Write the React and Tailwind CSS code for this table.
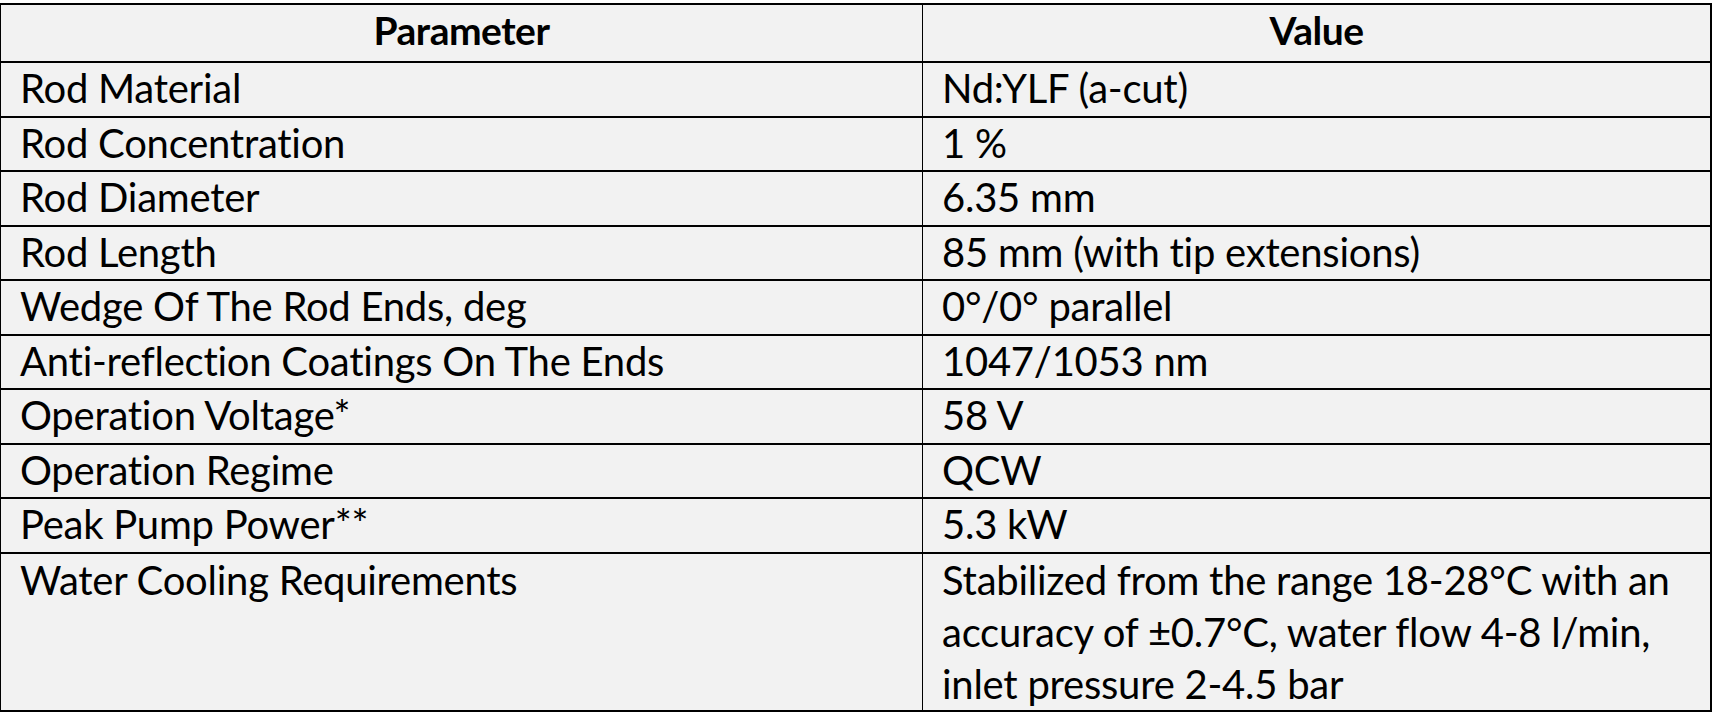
const rows = [
  ['Rod Material', 'Nd:YLF (a-cut)'],
  ['Rod Concentration', '1 %'],
  ['Rod Diameter', '6.35 mm'],
  ['Rod Length', '85 mm (with tip extensions)'],
  ['Wedge Of The Rod Ends, deg', '0°/0° parallel'],
  ['Anti-reflection Coatings On The Ends', '1047/1053 nm'],
  ['Operation Voltage*', '58 V'],
  ['Operation Regime', 'QCW'],
  ['Peak Pump Power**', '5.3 kW'],
];

export default function App() {
  return (
    <div className="w-[1714px] h-[712px] bg-white pt-[3px] font-['Lato',sans-serif] text-black">
      <div className="w-[1712px] border-t-2 border-l border-r-2 border-black bg-[#f2f2f2]">
        {/* header */}
        <div className="flex h-[58px] border-b-2 border-black text-[39px] font-bold tracking-[-0.5px]">
          <div className="w-[922px] border-r border-black flex items-center justify-center pb-[6px]">Parameter</div>
          <div className="flex-1 flex items-center justify-center pb-[6px]">Value</div>
        </div>
        {rows.map(([p, v]) => (
          <div key={p} className="flex h-[54.5px] border-b-2 border-black text-[40px] tracking-[-0.25px]">
            <div className="w-[922px] border-r border-black flex items-center pl-[19px] pb-[2px]">{p}</div>
            <div className="flex-1 flex items-center pl-[19px] pb-[2px]">{v}</div>
          </div>
        ))}
        <div className="flex h-[158px] border-b-2 border-black text-[40px] tracking-[-0.25px] leading-[52px]">
          <div className="w-[922px] border-r border-black pl-[19px]">Water Cooling Requirements</div>
          <div className="flex-1 pl-[19px] pr-[8px]">
            Stabilized from the range 18-28°C with an accuracy of ±0.7°C, water flow 4-8 l/min, inlet pressure 2-4.5 bar
          </div>
        </div>
      </div>
    </div>
  );
}
